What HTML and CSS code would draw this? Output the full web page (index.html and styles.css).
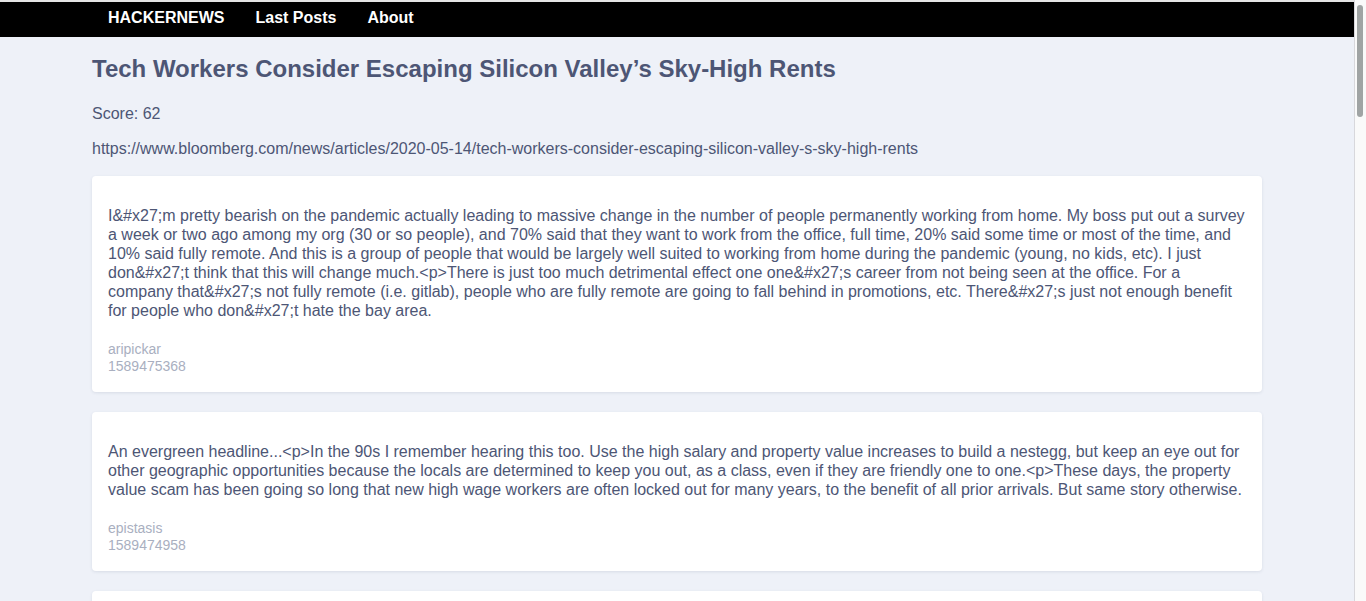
FILE: index.html
```html
<!DOCTYPE html>
<html lang="en">
<head>
<meta charset="utf-8">
<title>Hackernews</title>
<link rel="stylesheet" href="styles.css">
</head>
<body>
<nav class="navbar">
  <div class="container nav-inner">
    <a class="nav-link" href="#">HACKERNEWS</a>
    <a class="nav-link" href="#">Last Posts</a>
    <a class="nav-link" href="#">About</a>
  </div>
</nav>
<main class="container main">
  <h1 class="title">Tech Workers Consider Escaping Silicon Valley’s Sky-High Rents</h1>
  <p class="score">Score: 62</p>
  <p class="url">https://www.bloomberg.com/news/articles/2020-05-14/tech-workers-consider-escaping-silicon-valley-s-sky-high-rents</p>
  <section class="comments">
    <article class="card">
      <p class="card-text">I&amp;#x27;m pretty bearish on the pandemic actually leading to massive change in the number of people permanently working from home. My boss put out a survey a week or two ago among my org (30 or so people), and 70% said that they want to work from the office, full time, 20% said some time or most of the time, and 10% said fully remote. And this is a group of people that would be largely well suited to working from home during the pandemic (young, no kids, etc). I just don&amp;#x27;t think that this will change much.&lt;p&gt;There is just too much detrimental effect one one&amp;#x27;s career from not being seen at the office. For a company that&amp;#x27;s not fully remote (i.e. gitlab), people who are fully remote are going to fall behind in promotions, etc. There&amp;#x27;s just not enough benefit for people who don&amp;#x27;t hate the bay area.</p>
      <div class="meta">
        <div>aripickar</div>
        <div>1589475368</div>
      </div>
    </article>
    <article class="card">
      <p class="card-text">An evergreen headline...&lt;p&gt;In the 90s I remember hearing this too. Use the high salary and property value increases to build a nestegg, but keep an eye out for other geographic opportunities because the locals are determined to keep you out, as a class, even if they are friendly one to one.&lt;p&gt;These days, the property value scam has been going so long that new high wage workers are often locked out for many years, to the benefit of all prior arrivals. But same story otherwise.</p>
      <div class="meta">
        <div>epistasis</div>
        <div>1589474958</div>
      </div>
    </article>
    <article class="card card-last"></article>
  </section>
</main>
<div class="scrollbar"><div class="scroll-thumb"></div></div>
</body>
</html>
```

FILE: styles.css
```css
* {
  box-sizing: border-box;
}

html, body {
  margin: 0;
  padding: 0;
}

body {
  background: #eef1f8;
  font-family: "Liberation Sans", Arial, sans-serif;
  color: #4d5675;
  border-top: 2px solid #e4e4e4;
  margin-right: 12px;
}

.container {
  width: 1170px;
  margin: 0 auto;
}

.navbar {
  background: #000;
  height: 35px;
}

.nav-inner {
  display: flex;
  align-items: center;
  height: 35px;
  padding: 0 16px 4px;
  gap: 31px;
}

.nav-link {
  color: #fff;
  font-weight: bold;
  font-size: 16px;
  text-decoration: none;
}

.main {
  padding-top: 18px;
  padding-bottom: 40px;
}

.title {
  font-size: 24px;
  font-weight: bold;
  line-height: 28px;
  margin: 0;
}

.score {
  font-size: 16px;
  line-height: 19px;
  margin: 21px 0 0;
}

.url {
  font-size: 16px;
  line-height: 19px;
  margin: 16px 0 0;
}

.comments {
  display: flex;
  flex-direction: column;
  gap: 20px;
  margin-top: 18px;
}

.card {
  background: #fff;
  border-radius: 4px;
  box-shadow: 0 1px 3px rgba(60, 70, 110, 0.12);
  padding: 16px 16px 17px;
}

.card-last {
  height: 120px;
}

.card-text {
  font-size: 16px;
  line-height: 19px;
  margin: 14px 0 0;
}

.meta {
  margin-top: 21px;
  font-size: 14px;
  line-height: 17px;
  color: #a9afbf;
}

.scrollbar {
  position: fixed;
  top: 0;
  right: 0;
  width: 12px;
  height: 100%;
  background: #fafafa;
  border-left: 1px solid #d8d8dc;
}

.scroll-thumb {
  width: 6px;
  height: 112px;
  margin: 5px 0 0 2px;
  background: #a0a4a4;
  border-radius: 3px;
}
```
